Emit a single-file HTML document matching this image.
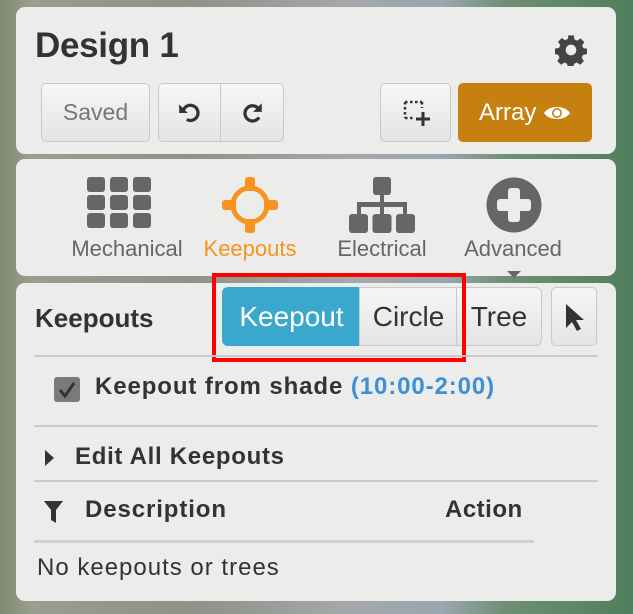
<!DOCTYPE html>
<html><head><meta charset="utf-8"><style>
*{box-sizing:border-box;margin:0;padding:0}
body{width:633px;height:614px;overflow:hidden;position:relative;font-family:"Liberation Sans",sans-serif;
background:linear-gradient(90deg,#7f8a72 0%,#9a9e90 5%,#8e9288 30%,#a4a8aa 55%,#9aa6b0 70%,#6f8f74 80%,#4f7f5c 100%)}
.p{position:absolute;left:16px;width:600px;background:#ececeb;border-radius:9px}
.btn{position:absolute;background:linear-gradient(#f6f6f6,#e4e4e4);border:1.5px solid #c9c9c9;border-radius:5px;display:flex;align-items:center;justify-content:center;color:#333}
.t{position:absolute;white-space:nowrap}
.line{position:absolute;left:34px;width:564px;height:2px;background:#c9c9c9}
.lab{position:absolute;top:236px;font-size:22px;color:#666;width:140px;text-align:center}
</style></head><body>
<div class="p" style="top:7px;height:147px"></div>
<div class="p" style="top:159px;height:117px"></div>
<div class="p" style="top:283px;height:318px"></div>

<div class="t" style="left:35px;top:26px;font-size:35px;font-weight:bold;color:#333;letter-spacing:-0.3px">Design 1</div>
<svg style="position:absolute;left:555px;top:34px" width="32" height="32" viewBox="0 0 24 24"><path fill="#444" d="M10 1h4l.6 3 2 1 2.6-1.7 2.8 2.8L20.3 8.6l1 2 2.7.5v4l-3 .6-1 2 1.7 2.6-2.8 2.8-2.6-1.7-2 1-.6 3h-4l-.6-3-2-1-2.6 1.7-2.8-2.8 1.7-2.6-1-2L0 15v-4l3-.6 1-2L2.3 5.8l2.8-2.8L7.6 4.7l2-1zM12 8a4 4 0 100 8 4 4 0 000-8z"/></svg>

<div class="btn" style="left:41px;top:83px;width:109px;height:59px;color:#777;font-size:23px">Saved</div>
<div class="btn" style="left:158px;top:83px;width:64px;height:59px;border-radius:5px 0 0 5px"><svg width="26" height="26" viewBox="0 0 24 24"><path d="M6 9a7 7 0 113 9" fill="none" stroke="#333" stroke-width="3"/><path d="M2 4v8h8z" fill="#333"/></svg></div>
<div class="btn" style="left:220px;top:83px;width:64px;height:59px;border-radius:0 5px 5px 0"><svg width="26" height="26" viewBox="0 0 24 24"><path d="M18 8a7 7 0 10.5 8" fill="none" stroke="#333" stroke-width="3"/><path d="M21 3v8h-8z" fill="#333"/></svg></div>
<div class="btn" style="left:380px;top:83px;width:71px;height:59px"><svg width="30" height="30" viewBox="0 0 30 30"><path d="M4 4h17M4 4v16M4 20h8M21 4v6" stroke="#333" stroke-width="2.5" stroke-dasharray="2.5 2.5" fill="none"/><path d="M22 14v14M15 21h14" stroke="#333" stroke-width="3"/></svg></div>
<div class="btn" style="left:458px;top:83px;width:134px;height:59px;background:#c6800f;border-color:#c6800f;color:#fff;font-size:24px">Array&nbsp;<svg width="28" height="18" viewBox="0 0 28 18"><path d="M1 9C6 1 22 1 27 9 22 17 6 17 1 9z" fill="#fff"/><circle cx="14" cy="9" r="5" fill="#c6800f"/><circle cx="14" cy="9" r="3.4" fill="#fff"/></svg></div>

<svg style="position:absolute;left:87px;top:177px" width="64" height="51" viewBox="0 0 64 51"><g fill="#666"><rect x="0" y="0" width="18" height="15" rx="3"/><rect x="23" y="0" width="18" height="15" rx="3"/><rect x="46" y="0" width="18" height="15" rx="3"/><rect x="0" y="18" width="18" height="15" rx="3"/><rect x="23" y="18" width="18" height="15" rx="3"/><rect x="46" y="18" width="18" height="15" rx="3"/><rect x="0" y="36" width="18" height="15" rx="3"/><rect x="23" y="36" width="18" height="15" rx="3"/><rect x="46" y="36" width="18" height="15" rx="3"/></g></svg>
<svg style="position:absolute;left:222px;top:177px" width="56" height="56" viewBox="0 0 56 56"><circle cx="28" cy="28" r="17" fill="none" stroke="#f7931e" stroke-width="5"/><g fill="#f7931e"><rect x="23" y="0" width="10" height="14" rx="3"/><rect x="23" y="42" width="10" height="14" rx="3"/><rect x="0" y="23" width="14" height="10" rx="3"/><rect x="42" y="23" width="14" height="10" rx="3"/></g></svg>
<svg style="position:absolute;left:349px;top:177px" width="66" height="56" viewBox="0 0 66 56"><g fill="#666"><rect x="24" y="0" width="18" height="18" rx="3"/><rect x="31" y="16" width="4" height="12"/><rect x="8" y="25" width="50" height="5"/><rect x="8" y="25" width="4" height="14"/><rect x="54" y="25" width="4" height="14"/><rect x="31" y="25" width="4" height="14"/><rect x="0" y="37" width="19" height="19" rx="3"/><rect x="23.5" y="37" width="19" height="19" rx="3"/><rect x="47" y="37" width="19" height="19" rx="3"/></g></svg>
<svg style="position:absolute;left:486px;top:177px" width="56" height="56" viewBox="0 0 56 56"><circle cx="28" cy="28" r="27.5" fill="#666"/><rect x="22" y="11" width="12" height="34" rx="3" fill="#ececeb"/><rect x="11" y="22" width="34" height="12" rx="3" fill="#ececeb"/></svg>
<div class="lab" style="left:57px">Mechanical</div>
<div class="lab" style="left:180px;color:#f7931e">Keepouts</div>
<div class="lab" style="left:312px">Electrical</div>
<div class="lab" style="left:443px">Advanced</div>
<svg style="position:absolute;left:507px;top:271px" width="14" height="7"><path d="M0 0h14L7 7z" fill="#666"/></svg>

<div class="t" style="left:35px;top:303px;font-size:26px;font-weight:bold;color:#333">Keepouts</div>
<div class="btn" style="left:222px;top:287px;width:139px;height:59px;background:#3aa8cc;border-color:#3aa8cc;color:#fff;font-size:28px;border-radius:6px 0 0 6px">Keepout</div>
<div class="btn" style="left:359px;top:287px;width:99px;height:59px;font-size:28px;border-radius:0">Circle</div>
<div class="btn" style="left:456px;top:287px;width:86px;height:59px;font-size:28px;border-radius:0 6px 6px 0">Tree</div>
<div class="btn" style="left:551px;top:287px;width:46px;height:59px"><svg width="20" height="30" viewBox="0 0 20 30"><path d="M2 2v24l6-6 5 9 4-2-5-9h8z" fill="#333"/></svg></div>
<div style="position:absolute;left:212px;top:273px;width:254px;height:89px;border:4px solid #f00"></div>

<div class="line" style="top:355px"></div>
<div style="position:absolute;left:54px;top:377px;width:26px;height:25px;background:#7a7a7a;border-radius:3px"></div>
<svg style="position:absolute;left:56px;top:379px" width="22" height="22" viewBox="0 0 22 22"><path d="M4 11l5 6 9-13" fill="none" stroke="#333" stroke-width="3"/></svg>
<div class="t" style="left:95px;top:373px;font-size:24px;font-weight:bold;color:#333;letter-spacing:0.9px">Keepout from shade <span style="color:#3d8fd6">(10:00-2:00)</span></div>
<div class="line" style="top:425px"></div>
<svg style="position:absolute;left:45px;top:450px" width="9" height="16"><path d="M0 0l9 8-9 8z" fill="#333"/></svg>
<div class="t" style="left:75px;top:443px;font-size:24px;font-weight:bold;color:#333;letter-spacing:0.7px">Edit All Keepouts</div>
<div class="line" style="top:480px"></div>
<svg style="position:absolute;left:44px;top:501px" width="19" height="22" viewBox="0 0 19 22"><path d="M0 0h19l-7 9v13l-5-3V9z" fill="#333"/></svg>
<div class="t" style="left:85px;top:496px;font-size:24px;font-weight:bold;color:#333;letter-spacing:0.9px">Description</div>
<div class="t" style="left:445px;top:496px;font-size:24px;font-weight:bold;color:#333;letter-spacing:0.5px">Action</div>
<div style="position:absolute;left:34px;top:540px;width:500px;height:3px;background:#d2d2d2"></div>
<div class="t" style="left:37px;top:554px;font-size:24px;color:#333;letter-spacing:1px">No keepouts or trees</div>
</body></html>
